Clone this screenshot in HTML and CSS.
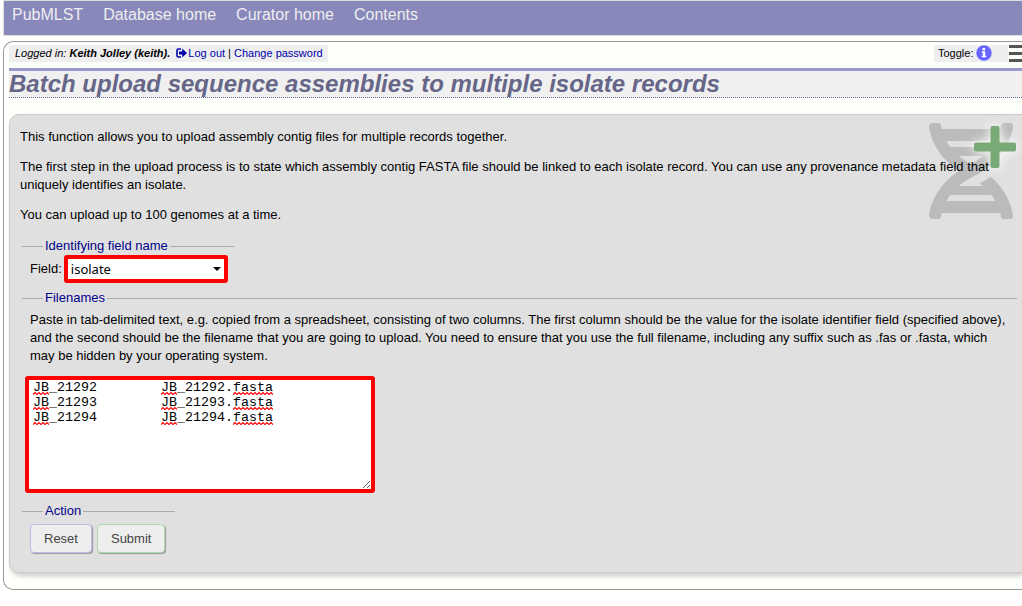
FILE: index.html
```html
<!DOCTYPE html>
<html lang="en">
<head>
<meta charset="utf-8">
<title>Batch upload sequence assemblies - PubMLST</title>
<link rel="stylesheet" href="styles.css">
</head>
<body>
<nav class="menu">
  <a href="#">PubMLST</a>
  <a href="#">Database home</a>
  <a href="#">Curator home</a>
  <a href="#">Contents</a>
</nav>
<main class="page">
  <div class="status">
    <div class="login"><i>Logged in: <b>Keith Jolley (keith).</b></i>
      <a href="#"><svg class="out" viewBox="0 0 11 10" aria-hidden="true"><path d="M5 1H2.5Q1 1 1 2.5v5Q1 9 2.5 9H5" fill="none" stroke="currentColor" stroke-width="1.6"/><path d="M3 3.4h3.2V.5L11 5 6.200 9.500V6.600H3z" fill="currentColor"/></svg>Log out</a> | <a href="#">Change password</a></div>
    <div class="tools">
      <div class="toggle">Toggle:
        <svg class="info" viewBox="0 0 16 16" role="img" aria-label="Information"><circle cx="8" cy="8" r="7.700" fill="#66f"/><path d="M6.500 3h2.600v2.200H6.500zM5.800 6.300h3.400v4.400h1v1.500H5.800v-1.500h1V7.800h-1z" fill="#fff"/></svg>
      </div>
      <button class="burger" type="button" aria-label="Menu"><span></span><span></span><span></span></button>
    </div>
  </div>
  <h1>Batch upload sequence assemblies to multiple isolate records</h1>
  <form class="panel" onsubmit="return false">
    <svg class="art" viewBox="0 0 88 96" aria-hidden="true">
      <defs><filter id="glow" x="-60%" y="-60%" width="220%" height="220%"><feGaussianBlur stdDeviation="5"/></filter></defs>
      <path transform="scale(.1875)" fill="#bbb" d="M.1 494.1c-1.100 9.500 6.300 17.800 15.900 17.800l32.300.1c8.100 0 14.900-5.900 16-13.900.7-4.900 1.800-11.100 3.400-18.100H380c1.600 6.900 2.900 13.200 3.500 18.100 1.100 8 7.900 14 16 13.900l32.300-.1c9.600 0 17.100-8.300 15.900-17.800-4.600-37.900-25.600-129-118.900-207.700-17.600 12.400-37.100 24.200-58.500 35.400 6.200 4.600 11.400 9.400 17 14.200H159.700c21.300-18.100 47-35.600 78.700-51.400C410.500 199.100 442.100 65.800 447.900 17.900 449 8.400 441.600.1 432 .1L399.600 0c-8.100 0-14.900 5.900-16 13.900-.7 4.900-1.800 11.100-3.400 18.100H67.800c-1.600-7-2.700-13.100-3.400-18.100-1.100-8-7.900-13.900-16-13.900L16.100.1C6.500.1-1 8.400.1 17.900 5.300 60.800 31.400 171.800 160 256 31.500 340.200 5.300 451.200.1 494.100zM224 219.600c-25.100-13.700-46.400-28.400-64.300-43.600h128.500c-17.800 15.200-39.100 30-64.200 43.600zM355.100 96c-5.800 10.400-12.800 21.100-21 32H114c-8.300-10.900-15.300-21.600-21-32h262.100zM92.900 416c5.800-10.400 12.800-21.100 21-32h219.400c8.300 10.900 15.400 21.600 21.200 32H92.900z"/>
      <path d="M66 3v42M45 24h42" stroke="#fff" stroke-width="12" opacity=".9" filter="url(#glow)"/>
      <g fill="#7a7"><rect x="61.500" y="3" width="9" height="42" rx="2"/><rect x="45" y="19.500" width="42" height="9" rx="2"/></g>
    </svg>
    <div class="body">
      <p>This function allows you to upload assembly contig files for multiple records together.</p>
      <p>The first step in the upload process is to state which assembly contig FASTA file should be linked to each isolate record. You can use any provenance metadata field that uniquely identifies an isolate.</p>
      <p>You can upload up to 100 genomes at a time.</p>
      <fieldset class="fit ident">
        <legend>Identifying field name</legend>
        <div class="field"><label for="field">Field:</label>
          <select id="field"><option>isolate</option></select></div>
      </fieldset>
      <fieldset class="files">
        <legend>Filenames</legend>
        <p>Paste in tab-delimited text, e.g. copied from a spreadsheet, consisting of two columns. The first column should be the value for the isolate identifier field (specified above), and the second should be the filename that you are going to upload. You need to ensure that you use the full filename, including any suffix such as .fas or .fasta, which may be hidden by your operating system.</p>
        <div class="paste">
          <textarea aria-label="Filenames">JB_21292&#9;JB_21292.fasta
JB_21293&#9;JB_21293.fasta
JB_21294&#9;JB_21294.fasta</textarea>
          <svg class="marks" aria-hidden="true">
            <defs>
              <pattern id="wave" width="4" height="15" patternUnits="userSpaceOnUse"><path d="M-1 12.500l1 1 2-2 2 2 1-1" transform="translate(0 1)" fill="none" stroke="#f00" stroke-width="1.200"/></pattern>
            </defs>
            <g fill="url(#wave)"><rect width="16" height="45"/><rect x="128" width="16" height="45"/><rect x="200" width="40" height="45"/></g>
          </svg>
        </div>
      </fieldset>
      <fieldset class="fit action">
        <legend>Action</legend>
        <div class="buttons"><button class="reset" type="reset">Reset</button><button class="submit" type="submit">Submit</button></div>
      </fieldset>
    </div>
  </form>
</main>
</body>
</html>
```
FILE: styles.css
```css
* { box-sizing: border-box; }
body {
  margin: 0 0 0 3px;
  background: #fff;
  color: #000;
  font: 13px/18px "Liberation Sans", Arial, sans-serif;
  overflow-x: hidden;
}
a { color: #00a; text-decoration: none; }
.menu {
  display: flex;
  gap: 20px;
  height: 36px;
  padding: 5px 8px;
  background: #88b;
  border: 1px solid #ddd;
  border-width: 1px 0 1px 1px;
  font-size: 16px;
}
.menu a { color: #eee; }
.page {
  margin-top: 5px;
  padding: 3px 0 16px 5px;
  background: #fdfffa;
  border: 1px solid #999;
  border-right: 0;
  border-radius: 10px 0 0 10px;
}
.status {
  display: flex;
  justify-content: space-between;
  font-size: 11px;
  line-height: 17px;
}
.login { padding: 0 5px 0 6px; background: #eee; }
.out { width: 11px; height: 10px; margin: 0 1px 0 3px; vertical-align: -1px; }
.tools { display: flex; gap: 1px; }
.toggle { display: flex; gap: 3px; width: 74px; padding-left: 4px; background: #eee; }
.info { width: 16px; height: 16px; }
.burger {
  display: flex;
  flex-direction: column;
  justify-content: space-between;
  width: 13px;
  height: 17px;
  padding: 0;
  border: 0;
  background: none;
}
.burger span { width: 13px; height: 3px; background: #555; }
h1 {
  margin: 6px 0 16px;
  background: #f0f0f0;
  border-top: 3px solid #99c;
  border-bottom: 1px dotted #669;
  color: #668;
  font: italic bold 24px/26px "Liberation Sans", Arial, sans-serif;
}
.panel {
  position: relative;
  padding: 13px 5px 19px 10px;
  background: #e0e0e0;
  border: 1px solid #ccc;
  border-right: 0;
  border-radius: 10px 0 0 10px;
  box-shadow: 2px 3px 5px #ccc;
}
.art { position: absolute; top: 8px; right: 5px; width: 88px; height: 96px; overflow: visible; }
.body { position: relative; }
p { margin: 0 0 12px; }
fieldset {
  margin: 0 0 0 2px;
  padding: 0 8px;
  border: 0;
  border-top: 1px solid #aaa;
}
legend { margin-left: 13px; padding: 0 2px; color: #008; }
.fit { width: fit-content; min-width: 153px; }
.ident { margin-top: 13px; padding-right: 6px; }
.field { display: flex; align-items: center; gap: 2px; }
select {
  appearance: none;
  width: 164px;
  height: 28px;
  padding: 0 3px;
  border: 4px solid #f00;
  border-radius: 3px;
  background: #fff url("data:image/svg+xml,%3Csvg xmlns='http://www.w3.org/2000/svg' width='8' height='4'%3E%3Cpath d='M0 0h8L4 4z'/%3E%3C/svg%3E") no-repeat right 3px center;
  color: #000;
  font: 13px "Noto Sans", sans-serif;
}
.files { margin-top: 6px; }
.files p { margin: 4px 0 11px; }
.paste { position: relative; width: 350px; margin-left: -5px; }
textarea {
  display: block;
  width: 350px;
  height: 117px;
  padding: 0 4px;
  border: 4px solid #f00;
  border-radius: 3px;
  outline: 0;
  background: #fff;
  color: #000;
  font-family: "Liberation Mono", monospace;
  line-height: 15px;
}
.marks { position: absolute; left: 8px; top: 4px; width: 240px; height: 45px; pointer-events: none; }
.action { margin-top: 9px; }
.buttons { display: flex; gap: 5px; padding-top: 4px; }
.buttons button {
  height: 29px;
  padding: 0 13px;
  background: #eee;
  border: 1px solid #bbe;
  border-radius: 4px;
  box-shadow: 1px 1px 1px #999;
  color: #444;
  font: 13px "Liberation Sans", Arial, sans-serif;
}
.buttons .submit { border-color: #ada; }
```
